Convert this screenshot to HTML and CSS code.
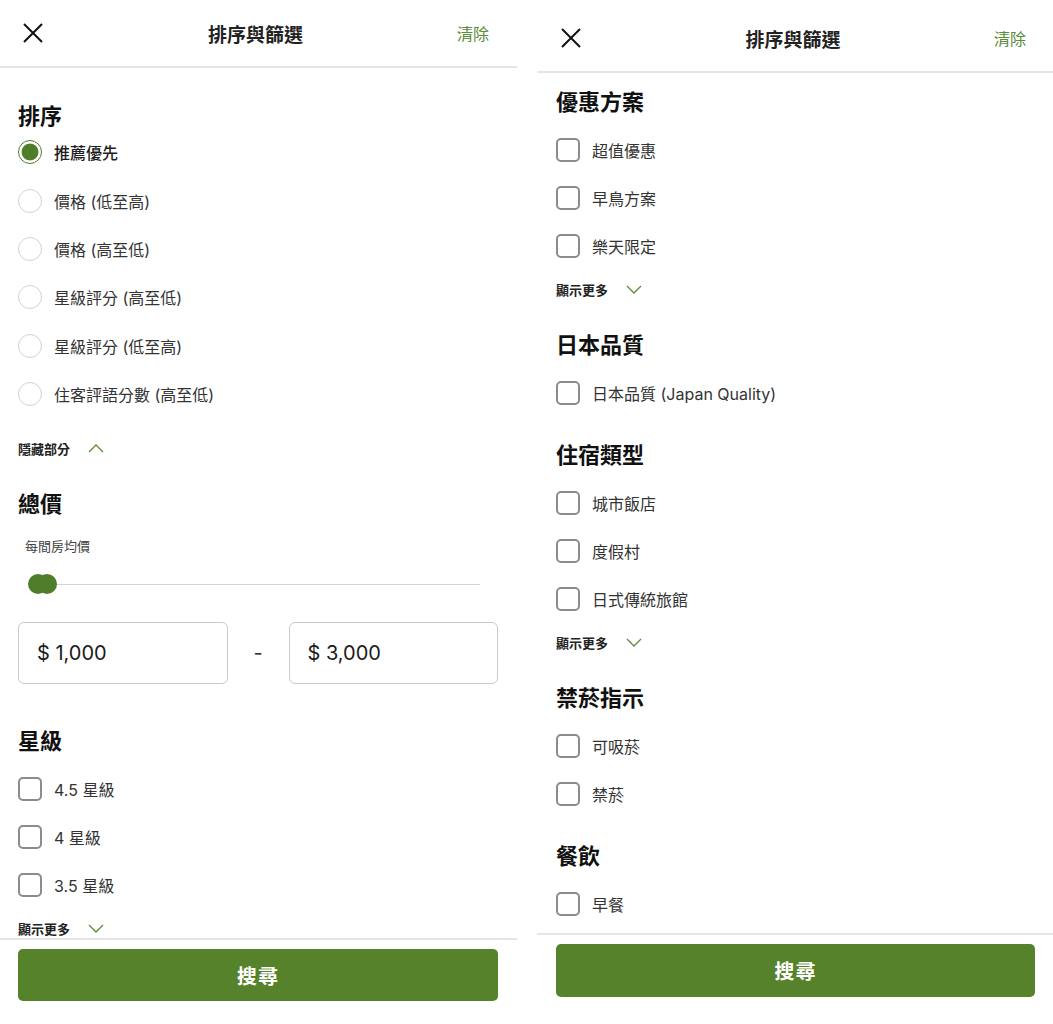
FILE: index.html
```html
<!DOCTYPE html>
<html lang="zh-Hant">
<head>
    <meta charset="UTF-8">
    <meta name="viewport" content="width=device-width, initial-scale=1.0">
    <title>排序與篩選</title>
    <link rel="stylesheet" href="styles.css">
</head>
<body>
    <div class="screens">
        <!-- first screen: sort + price + stars -->
        <section class="sheet">
            <header class="sheet-head">
                <span class="close"><svg width="22" height="22" viewBox="0 0 22 22"><path d="M2 2L20 20M20 2L2 20" stroke="#111" stroke-width="2" fill="none"/></svg></span>
                <h1>排序與篩選</h1>
                <span class="clear">清除</span>
            </header>
            <div class="sheet-body">
                <div class="group group-sort">
                    <h2>排序</h2>
                    <ul class="options radios">
                        <li class="checked"><span class="radio"></span>推薦優先</li>
                        <li><span class="radio"></span>價格 (低至高)</li>
                        <li><span class="radio"></span>價格 (高至低)</li>
                        <li><span class="radio"></span>星級評分 (高至低)</li>
                        <li><span class="radio"></span>星級評分 (低至高)</li>
                        <li><span class="radio"></span>住客評語分數 (高至低)</li>
                    </ul>
                    <div class="more">隱藏部分<svg width="16" height="9" viewBox="0 0 16 9"><polyline points="1,8 8,1 15,8" fill="none" stroke="#5b8c3a" stroke-width="1.3"/></svg></div>
                </div>
                <div class="group group-price">
                    <h2>總價</h2>
                    <p class="hint">每間房均價</p>
                    <div class="slider">
                        <span class="track"></span>
                        <span class="thumb"></span>
                        <span class="thumb thumb-max"></span>
                    </div>
                    <div class="range">
                        <div class="field">$ 1,000</div>
                        <span class="dash">-</span>
                        <div class="field">$ 3,000</div>
                    </div>
                </div>
                <div class="group">
                    <h2>星級</h2>
                    <ul class="options">
                        <li><span class="box"></span>4.5 星級</li>
                        <li><span class="box"></span>4 星級</li>
                        <li><span class="box"></span>3.5 星級</li>
                    </ul>
                    <div class="more">顯示更多<svg width="16" height="9" viewBox="0 0 16 9"><polyline points="1,1 8,8 15,1" fill="none" stroke="#5b8c3a" stroke-width="1.3"/></svg></div>
                </div>
            </div>
            <footer class="sheet-foot">
                <button class="search">搜尋</button>
            </footer>
        </section>

        <!-- second screen: same sheet scrolled further down -->
        <section class="sheet sheet-scrolled">
            <header class="sheet-head">
                <span class="close"><svg width="22" height="22" viewBox="0 0 22 22"><path d="M2 2L20 20M20 2L2 20" stroke="#111" stroke-width="2" fill="none"/></svg></span>
                <h1>排序與篩選</h1>
                <span class="clear">清除</span>
            </header>
            <div class="sheet-body">
                <div class="group">
                    <h2>優惠方案</h2>
                    <ul class="options">
                        <li><span class="box"></span>超值優惠</li>
                        <li><span class="box"></span>早鳥方案</li>
                        <li><span class="box"></span>樂天限定</li>
                    </ul>
                    <div class="more">顯示更多<svg width="16" height="9" viewBox="0 0 16 9"><polyline points="1,1 8,8 15,1" fill="none" stroke="#5b8c3a" stroke-width="1.3"/></svg></div>
                </div>
                <div class="group">
                    <h2>日本品質</h2>
                    <ul class="options">
                        <li><span class="box"></span>日本品質 (Japan Quality)</li>
                    </ul>
                </div>
                <div class="group">
                    <h2>住宿類型</h2>
                    <ul class="options">
                        <li><span class="box"></span>城市飯店</li>
                        <li><span class="box"></span>度假村</li>
                        <li><span class="box"></span>日式傳統旅館</li>
                    </ul>
                    <div class="more">顯示更多<svg width="16" height="9" viewBox="0 0 16 9"><polyline points="1,1 8,8 15,1" fill="none" stroke="#5b8c3a" stroke-width="1.3"/></svg></div>
                </div>
                <div class="group">
                    <h2>禁菸指示</h2>
                    <ul class="options">
                        <li><span class="box"></span>可吸菸</li>
                        <li><span class="box"></span>禁菸</li>
                    </ul>
                </div>
                <div class="group">
                    <h2>餐飲</h2>
                    <ul class="options">
                        <li><span class="box"></span>早餐</li>
                    </ul>
                </div>
            </div>
            <footer class="sheet-foot">
                <button class="search">搜尋</button>
            </footer>
        </section>
    </div>
</body>
</html>
```

FILE: styles.css
```css
body {
    margin: 0;
    background: white;
    font-family: Inter, "Noto Sans CJK TC", sans-serif;
    color: #333;
    overflow: hidden;
}
.screens {
    display: flex;
    gap: 20px;
    width: 1056px;
    height: 1024px;
}
.sheet {
    width: 517px;
    height: 1024px;
    display: flex;
    flex-direction: column;
    flex-shrink: 0;
}
.sheet-head {
    height: 66px;
    display: grid;
    grid-template-columns: 1fr auto 1fr;
    align-items: center;
    padding: 0 28px 0 22px;
    border-bottom: 2px solid #e6e6e6;
}
.sheet-scrolled .sheet-head {
    padding-top: 5px;
    padding-left: 23px;
}
.close {
    display: flex;
}
.sheet-head h1 {
    margin: 0;
    font-size: 19px;
    font-weight: bold;
    color: #222;
}
.clear {
    justify-self: end;
    font-size: 16px;
    color: #5b8c3a;
}
.sheet-body {
    flex: 1;
    overflow: hidden;
    display: flex;
    flex-direction: column;
    padding: 0 19px 0 18px;
}
.sheet-scrolled .sheet-body {
    padding-left: 19px;
}
.group {
    display: flex;
    flex-direction: column;
    flex-shrink: 0;
    margin-top: 24px;
}
.group-sort {
    margin-top: 34px;
}
.sheet-scrolled .group:first-child {
    margin-top: 15px;
}
.group h2 {
    margin: 0 0 10px;
    font-size: 22px;
    line-height: 28px;
    font-weight: bold;
    color: #111;
}
.group-sort h2 {
    margin-bottom: -2px;
}
.options {
    list-style: none;
    margin: 0;
    padding: 0;
}
.options li {
    height: 48px;
    display: flex;
    align-items: center;
    gap: 12px;
    font-size: 16px;
    color: #333;
}
.radios li {
    height: 48.4px;
}
.radios li.checked {
    font-weight: 500;
    color: #1e1e1e;
}
.radio {
    box-sizing: border-box;
    width: 24px;
    height: 24px;
    border: 1px solid #d2d2d2;
    border-radius: 50%;
    flex-shrink: 0;
}
.checked .radio {
    border: 1.5px solid #4f7d2a;
    background: radial-gradient(circle, #4f7d2a 0 8px, white 8.8px);
}
.box {
    box-sizing: border-box;
    width: 24px;
    height: 24px;
    border: 2px solid #8c8c8c;
    border-radius: 5px;
    flex-shrink: 0;
}
.more {
    display: flex;
    align-items: center;
    gap: 18px;
    height: 20px;
    margin: 9px 0 8px;
    font-size: 13px;
    font-weight: bold;
    color: #222;
}
.group-sort .more {
    margin-top: 20px;
}
.group-price {
    margin-bottom: 19px;
}
.hint {
    margin: 9px 0 0 7px;
    font-size: 13px;
    line-height: 18px;
    color: #444;
}
.slider {
    position: relative;
    height: 20px;
    margin-top: 19px;
}
.track {
    position: absolute;
    left: 20px;
    right: 18px;
    top: 10px;
    height: 1px;
    background: #d4d4d4;
}
.thumb {
    position: absolute;
    left: 10px;
    top: 0;
    width: 20px;
    height: 20px;
    border-radius: 50%;
    background: #4f7d2a;
}
.thumb-max {
    left: 19px;
}
.range {
    display: grid;
    grid-template-columns: 1fr 61px 1fr;
    align-items: center;
    margin-top: 28px;
}
.field {
    height: 60px;
    border: 1px solid #cacaca;
    border-radius: 6px;
    display: flex;
    align-items: center;
    padding-left: 18px;
    font-size: 20px;
    color: #1a1a1a;
}
.dash {
    text-align: center;
    font-size: 20px;
    color: #333;
}
.sheet-foot {
    height: 75px;
    padding-top: 9px;
    border-top: 2px solid #e6e6e6;
    padding-left: 18px;
    padding-right: 19px;
}
.sheet-scrolled .sheet-foot {
    height: 80px;
    padding-left: 19px;
}
.search {
    width: 100%;
    height: 52px;
    border: none;
    border-radius: 5px;
    background: #55822b;
    color: white;
    font-family: "Noto Sans CJK TC", sans-serif;
    font-size: 20px;
    font-weight: bold;
    letter-spacing: 1px;
}
.sheet-scrolled .search {
    height: 53px;
}
```
